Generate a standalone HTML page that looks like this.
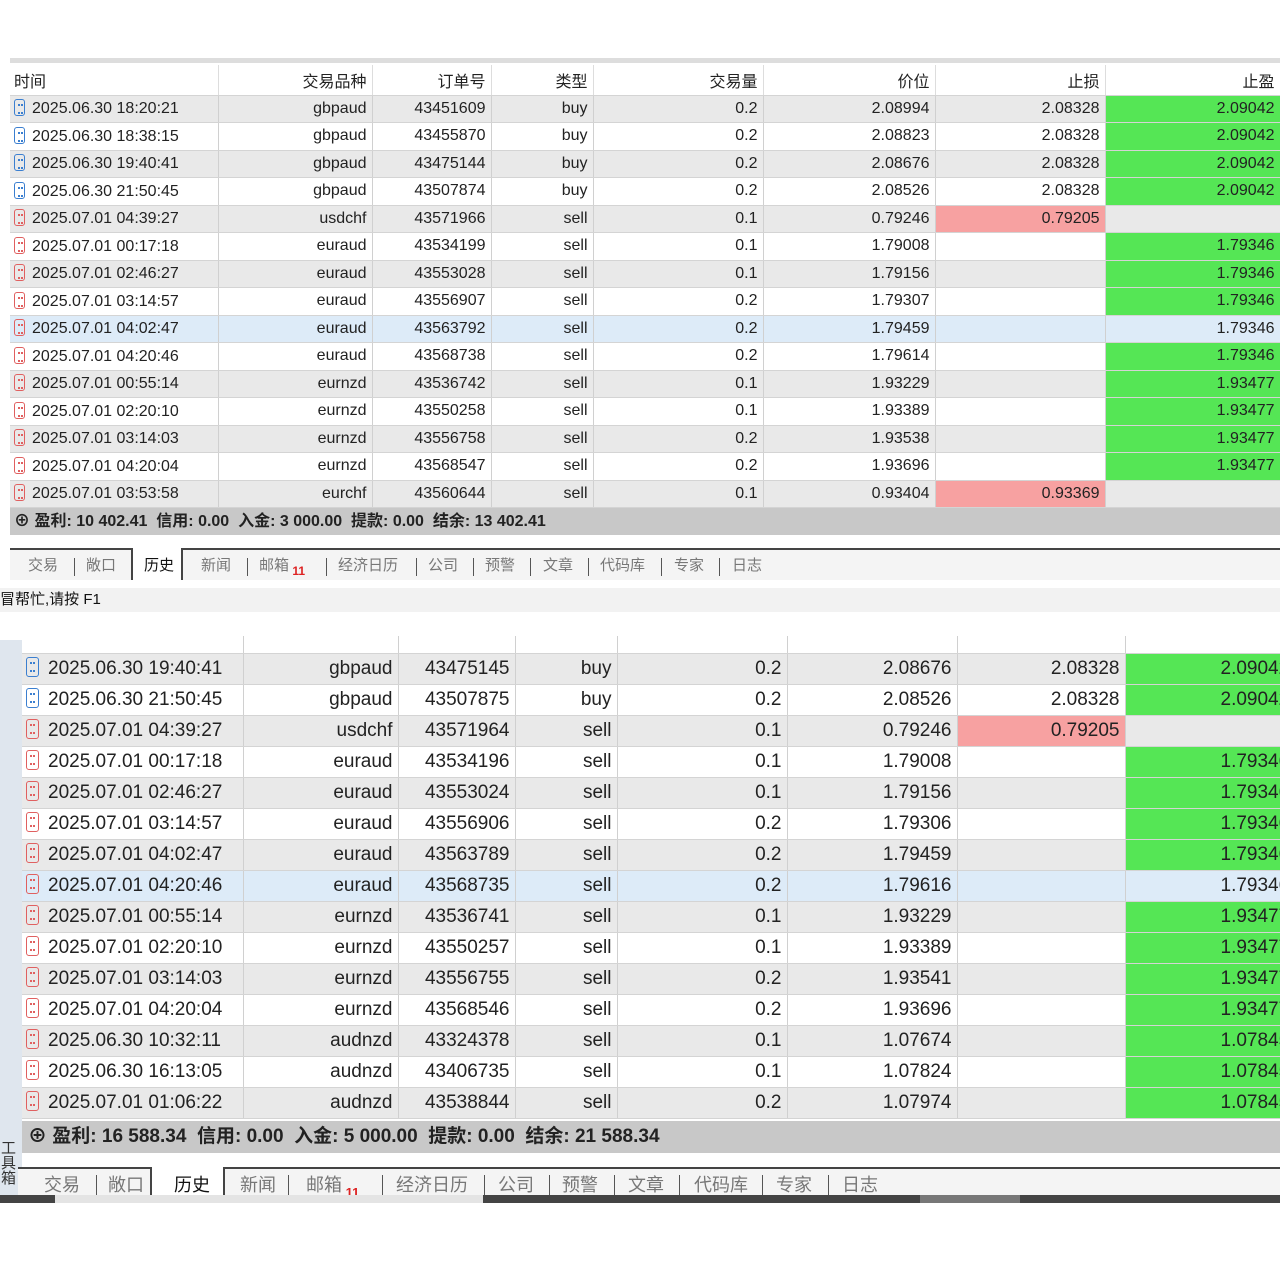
<!DOCTYPE html>
<html><head><meta charset="utf-8"><style>
*{margin:0;padding:0;box-sizing:border-box}
body{width:1280px;height:1280px;background:#fff;position:relative;overflow:hidden;font-family:"Liberation Sans","Noto Sans CJK SC",sans-serif;color:#222}
table{position:absolute;border-collapse:collapse;table-layout:fixed}
td{white-space:nowrap;overflow:hidden;text-align:right;padding-right:5px;border-right:1px solid #d0d0d0;border-bottom:1px solid #d4d4d4}
td:first-child{text-align:left;padding-left:4px}
tr.g td{background:#e9e9e9}
tr.h td{background:#ddebf8}
td.gr{background:#55e655!important}
td.rd{background:#f7a1a1!important}
.ic{display:inline-block;width:11px;height:17px;border:1.5px solid #3b7fd0;border-radius:3px;vertical-align:-3px;margin-right:7px;position:relative}
.ic:after{content:"";position:absolute;left:3px;top:4px;width:3px;height:6px;border-top:2px dotted #3b7fd0;border-bottom:2px dotted #3b7fd0}
.r{border-color:#e06060}.r:after{border-color:#e06060}
#t1{left:10px;top:65px;width:1270px;font-size:16px}
#t1 tr{height:27.5px}
#t1 tr.hd{height:30px}
#t1 tr.hd td{background:#fff;border-right:1px solid #ddd}
#t2{left:22px;top:636px;width:1300px;font-size:19px}
#t2 tr{height:31px}
#t2 tr.hd{height:17px}
#t2 tr.hd td{background:#fff}
#t2 .ic{width:13px;height:20px;margin-right:9px}
.sum{position:absolute;background:#c8c8c8;font-weight:bold}
.tabs{position:absolute;left:10px;right:0;border-top:2px solid #444;background:#f4f4f4;color:#777}
.tabs span{position:absolute;top:4px}
.sep{position:absolute;width:1px;background:#555}
</style></head><body>
<div style="position:absolute;left:10px;top:58px;width:1270px;height:5px;background:#ddd"></div>
<table id="t1">
<colgroup><col style="width:208px"><col style="width:154px"><col style="width:119px"><col style="width:102px"><col style="width:170px"><col style="width:172px"><col style="width:170px"><col style="width:175px"></colgroup>
<tr class="hd"><td>时间</td><td>交易品种</td><td>订单号</td><td>类型</td><td>交易量</td><td>价位</td><td>止损</td><td>止盈</td></tr>
<tr class="g"><td><i class="ic"></i>2025.06.30 18:20:21</td><td>gbpaud</td><td>43451609</td><td>buy</td><td>0.2</td><td>2.08994</td><td>2.08328</td><td class="gr">2.09042</td></tr>
<tr><td><i class="ic"></i>2025.06.30 18:38:15</td><td>gbpaud</td><td>43455870</td><td>buy</td><td>0.2</td><td>2.08823</td><td>2.08328</td><td class="gr">2.09042</td></tr>
<tr class="g"><td><i class="ic"></i>2025.06.30 19:40:41</td><td>gbpaud</td><td>43475144</td><td>buy</td><td>0.2</td><td>2.08676</td><td>2.08328</td><td class="gr">2.09042</td></tr>
<tr><td><i class="ic"></i>2025.06.30 21:50:45</td><td>gbpaud</td><td>43507874</td><td>buy</td><td>0.2</td><td>2.08526</td><td>2.08328</td><td class="gr">2.09042</td></tr>
<tr class="g"><td><i class="ic r"></i>2025.07.01 04:39:27</td><td>usdchf</td><td>43571966</td><td>sell</td><td>0.1</td><td>0.79246</td><td class="rd">0.79205</td><td></td></tr>
<tr><td><i class="ic r"></i>2025.07.01 00:17:18</td><td>euraud</td><td>43534199</td><td>sell</td><td>0.1</td><td>1.79008</td><td></td><td class="gr">1.79346</td></tr>
<tr class="g"><td><i class="ic r"></i>2025.07.01 02:46:27</td><td>euraud</td><td>43553028</td><td>sell</td><td>0.1</td><td>1.79156</td><td></td><td class="gr">1.79346</td></tr>
<tr><td><i class="ic r"></i>2025.07.01 03:14:57</td><td>euraud</td><td>43556907</td><td>sell</td><td>0.2</td><td>1.79307</td><td></td><td class="gr">1.79346</td></tr>
<tr class="h"><td><i class="ic r"></i>2025.07.01 04:02:47</td><td>euraud</td><td>43563792</td><td>sell</td><td>0.2</td><td>1.79459</td><td></td><td>1.79346</td></tr>
<tr><td><i class="ic r"></i>2025.07.01 04:20:46</td><td>euraud</td><td>43568738</td><td>sell</td><td>0.2</td><td>1.79614</td><td></td><td class="gr">1.79346</td></tr>
<tr class="g"><td><i class="ic r"></i>2025.07.01 00:55:14</td><td>eurnzd</td><td>43536742</td><td>sell</td><td>0.1</td><td>1.93229</td><td></td><td class="gr">1.93477</td></tr>
<tr><td><i class="ic r"></i>2025.07.01 02:20:10</td><td>eurnzd</td><td>43550258</td><td>sell</td><td>0.1</td><td>1.93389</td><td></td><td class="gr">1.93477</td></tr>
<tr class="g"><td><i class="ic r"></i>2025.07.01 03:14:03</td><td>eurnzd</td><td>43556758</td><td>sell</td><td>0.2</td><td>1.93538</td><td></td><td class="gr">1.93477</td></tr>
<tr><td><i class="ic r"></i>2025.07.01 04:20:04</td><td>eurnzd</td><td>43568547</td><td>sell</td><td>0.2</td><td>1.93696</td><td></td><td class="gr">1.93477</td></tr>
<tr class="g"><td><i class="ic r"></i>2025.07.01 03:53:58</td><td>eurchf</td><td>43560644</td><td>sell</td><td>0.1</td><td>0.93404</td><td class="rd">0.93369</td><td></td></tr>
</table>
<div class="sum" style="left:10px;top:508px;width:1270px;height:27px;font-size:16px;line-height:27px;padding-left:4px">⊕ 盈利: 10 402.41&nbsp; 信用: 0.00&nbsp; 入金: 3 000.00&nbsp; 提款: 0.00&nbsp; 结余: 13 402.41</div>
<div class="tabs" style="top:548px;height:32px;font-size:15px">
<span style="left:18px">交易</span><div class="sep" style="left:64px;top:8px;height:18px"></div>
<span style="left:76px">敞口</span>
<div style="position:absolute;left:121px;top:-2px;width:52px;height:32px;background:#fff;border:2px solid #444;border-top:none;border-bottom:none"></div>
<span style="left:134px;color:#111">历史</span>
<span style="left:191px">新闻</span><div class="sep" style="left:237px;top:8px;height:18px"></div>
<span style="left:249px">邮箱<b style="color:#d22;font-size:12px;vertical-align:-5px"> 11</b></span><div class="sep" style="left:316px;top:8px;height:18px"></div>
<span style="left:328px">经济日历</span><div class="sep" style="left:406px;top:8px;height:18px"></div>
<span style="left:418px">公司</span><div class="sep" style="left:463px;top:8px;height:18px"></div>
<span style="left:475px">预警</span><div class="sep" style="left:520px;top:8px;height:18px"></div>
<span style="left:533px">文章</span><div class="sep" style="left:578px;top:8px;height:18px"></div>
<span style="left:590px">代码库</span><div class="sep" style="left:651px;top:8px;height:18px"></div>
<span style="left:664px">专家</span><div class="sep" style="left:709px;top:8px;height:18px"></div>
<span style="left:722px">日志</span>
</div>
<div style="position:absolute;left:0;top:588px;width:1280px;height:24px;background:#f2f2f2;font-size:15px;line-height:24px;color:#111">冒帮忙,请按 F1</div>
<div style="position:absolute;left:0;top:640px;width:22px;height:560px;background:#dfe6ee"></div>
<table id="t2">
<colgroup><col style="width:221px"><col style="width:155px"><col style="width:117px"><col style="width:102px"><col style="width:170px"><col style="width:170px"><col style="width:168px"><col style="width:197px"></colgroup>
<tr class="hd"><td></td><td></td><td></td><td></td><td></td><td></td><td></td><td></td></tr>
<tr class="g"><td><i class="ic"></i>2025.06.30 19:40:41</td><td>gbpaud</td><td>43475145</td><td>buy</td><td>0.2</td><td>2.08676</td><td>2.08328</td><td class="gr" style="text-align:left;padding-left:95px">2.09042</td></tr>
<tr><td><i class="ic"></i>2025.06.30 21:50:45</td><td>gbpaud</td><td>43507875</td><td>buy</td><td>0.2</td><td>2.08526</td><td>2.08328</td><td class="gr" style="text-align:left;padding-left:95px">2.09042</td></tr>
<tr class="g"><td><i class="ic r"></i>2025.07.01 04:39:27</td><td>usdchf</td><td>43571964</td><td>sell</td><td>0.1</td><td>0.79246</td><td class="rd">0.79205</td><td></td></tr>
<tr><td><i class="ic r"></i>2025.07.01 00:17:18</td><td>euraud</td><td>43534196</td><td>sell</td><td>0.1</td><td>1.79008</td><td></td><td class="gr" style="text-align:left;padding-left:95px">1.79346</td></tr>
<tr class="g"><td><i class="ic r"></i>2025.07.01 02:46:27</td><td>euraud</td><td>43553024</td><td>sell</td><td>0.1</td><td>1.79156</td><td></td><td class="gr" style="text-align:left;padding-left:95px">1.79346</td></tr>
<tr><td><i class="ic r"></i>2025.07.01 03:14:57</td><td>euraud</td><td>43556906</td><td>sell</td><td>0.2</td><td>1.79306</td><td></td><td class="gr" style="text-align:left;padding-left:95px">1.79346</td></tr>
<tr class="g"><td><i class="ic r"></i>2025.07.01 04:02:47</td><td>euraud</td><td>43563789</td><td>sell</td><td>0.2</td><td>1.79459</td><td></td><td class="gr" style="text-align:left;padding-left:95px">1.79346</td></tr>
<tr class="h"><td><i class="ic r"></i>2025.07.01 04:20:46</td><td>euraud</td><td>43568735</td><td>sell</td><td>0.2</td><td>1.79616</td><td></td><td style="text-align:left;padding-left:95px">1.79346</td></tr>
<tr class="g"><td><i class="ic r"></i>2025.07.01 00:55:14</td><td>eurnzd</td><td>43536741</td><td>sell</td><td>0.1</td><td>1.93229</td><td></td><td class="gr" style="text-align:left;padding-left:95px">1.93477</td></tr>
<tr><td><i class="ic r"></i>2025.07.01 02:20:10</td><td>eurnzd</td><td>43550257</td><td>sell</td><td>0.1</td><td>1.93389</td><td></td><td class="gr" style="text-align:left;padding-left:95px">1.93477</td></tr>
<tr class="g"><td><i class="ic r"></i>2025.07.01 03:14:03</td><td>eurnzd</td><td>43556755</td><td>sell</td><td>0.2</td><td>1.93541</td><td></td><td class="gr" style="text-align:left;padding-left:95px">1.93477</td></tr>
<tr><td><i class="ic r"></i>2025.07.01 04:20:04</td><td>eurnzd</td><td>43568546</td><td>sell</td><td>0.2</td><td>1.93696</td><td></td><td class="gr" style="text-align:left;padding-left:95px">1.93477</td></tr>
<tr class="g"><td><i class="ic r"></i>2025.06.30 10:32:11</td><td>audnzd</td><td>43324378</td><td>sell</td><td>0.1</td><td>1.07674</td><td></td><td class="gr" style="text-align:left;padding-left:95px">1.07845</td></tr>
<tr><td><i class="ic r"></i>2025.06.30 16:13:05</td><td>audnzd</td><td>43406735</td><td>sell</td><td>0.1</td><td>1.07824</td><td></td><td class="gr" style="text-align:left;padding-left:95px">1.07845</td></tr>
<tr class="g"><td><i class="ic r"></i>2025.07.01 01:06:22</td><td>audnzd</td><td>43538844</td><td>sell</td><td>0.2</td><td>1.07974</td><td></td><td class="gr" style="text-align:left;padding-left:95px">1.07845</td></tr>
</table>
<div class="sum" style="left:22px;top:1121px;width:1258px;height:32px;font-size:19px;line-height:32px;padding-left:6px">⊕ 盈利: 16 588.34&nbsp; 信用: 0.00&nbsp; 入金: 5 000.00&nbsp; 提款: 0.00&nbsp; 结余: 21 588.34</div>
<div class="tabs" style="left:18px;top:1167px;height:28px;font-size:18px">
<span style="left:26px;top:2px">交易</span><div class="sep" style="left:78px;top:6px;height:20px"></div>
<span style="left:90px;top:2px">敞口</span>
<div style="position:absolute;left:132px;top:-2px;width:75px;height:30px;background:#fff;border:2px solid #444;border-top:none;border-bottom:none"></div>
<span style="left:156px;top:2px;color:#111">历史</span>
<span style="left:222px;top:2px">新闻</span><div class="sep" style="left:270px;top:6px;height:20px"></div>
<span style="left:288px;top:2px">邮箱<b style="color:#d22;font-size:13px;vertical-align:-6px"> 11</b></span><div class="sep" style="left:364px;top:6px;height:20px"></div>
<span style="left:378px;top:2px">经济日历</span><div class="sep" style="left:466px;top:6px;height:20px"></div>
<span style="left:480px;top:2px">公司</span><div class="sep" style="left:531px;top:6px;height:20px"></div>
<span style="left:544px;top:2px">预警</span><div class="sep" style="left:596px;top:6px;height:20px"></div>
<span style="left:610px;top:2px">文章</span><div class="sep" style="left:661px;top:6px;height:20px"></div>
<span style="left:676px;top:2px">代码库</span><div class="sep" style="left:744px;top:6px;height:20px"></div>
<span style="left:758px;top:2px">专家</span><div class="sep" style="left:810px;top:6px;height:20px"></div>
<span style="left:824px;top:2px">日志</span>
</div>
<div style="position:absolute;left:0;top:1195px;width:55px;height:8px;background:#444"></div>
<div style="position:absolute;left:55px;top:1195px;width:428px;height:8px;background:#e4e4e4"></div>
<div style="position:absolute;left:483px;top:1195px;width:797px;height:8px;background:#444"></div>
<div style="position:absolute;left:920px;top:1195px;width:100px;height:8px;background:#777"></div>
<div style="position:absolute;left:0;top:1140px;width:18px;height:55px;font-size:15px;writing-mode:vertical-rl;color:#333">工具箱</div>
</body></html>
